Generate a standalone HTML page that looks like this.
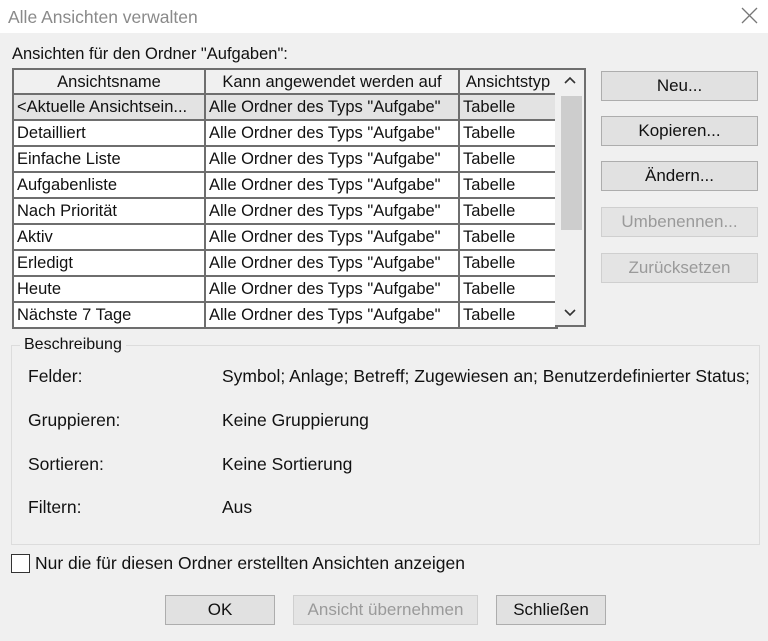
<!DOCTYPE html>
<html><head><meta charset="utf-8"><style>
*{margin:0;padding:0;box-sizing:border-box}
body{width:768px;height:641px;background:#f0f0f0;font-family:"Liberation Sans","DejaVu Sans",sans-serif;color:#111;position:relative;overflow:hidden;font-size:17px}
.abs{position:absolute;white-space:nowrap}
#title{left:0;top:0;width:768px;height:33px;background:#fff}
table{position:absolute;left:12px;top:68px;border-collapse:collapse;background:#fff;table-layout:fixed;width:544px}
td{border:2px solid #6e6e6e;height:26px;padding:0 3px;font-size:16.5px;white-space:nowrap;overflow:hidden;line-height:22px}
tr.h td{background:#f0f0f0;text-align:center;height:25px}
tr.sel td{background:#e3e3e3}
.btn{position:absolute;left:601px;width:157px;height:30px;border:1px solid #adadad;background:#e1e1e1;text-align:center;line-height:28px;font-size:17px}
.dis{color:#9a9a9a;background:#e4e4e4;border-color:#cfcfcf}
.d{font-size:17.5px}
</style></head><body>
<div id="title" class="abs"></div>
<div class="abs" style="left:8px;top:7px;color:#8a8a8a;font-size:17.5px">Alle Ansichten verwalten</div>
<svg class="abs" style="left:741px;top:7px" width="17" height="17"><path d="M1 1L16 16M16 1L1 16" stroke="#777" stroke-width="1.3"/></svg>
<div class="abs" style="left:12px;top:45px;font-size:16.5px">Ansichten für den Ordner "Aufgaben":</div>
<table>
<colgroup><col style="width:192px"><col style="width:254px"><col style="width:98px"></colgroup>
<tr class="h"><td>Ansichtsname</td><td>Kann angewendet werden auf</td><td>Ansichtstyp</td></tr>
<tr class="sel"><td>&lt;Aktuelle Ansichtsein...</td><td>Alle Ordner des Typs "Aufgabe"</td><td>Tabelle</td></tr>
<tr><td>Detailliert</td><td>Alle Ordner des Typs "Aufgabe"</td><td>Tabelle</td></tr>
<tr><td>Einfache Liste</td><td>Alle Ordner des Typs "Aufgabe"</td><td>Tabelle</td></tr>
<tr><td>Aufgabenliste</td><td>Alle Ordner des Typs "Aufgabe"</td><td>Tabelle</td></tr>
<tr><td>Nach Priorität</td><td>Alle Ordner des Typs "Aufgabe"</td><td>Tabelle</td></tr>
<tr><td>Aktiv</td><td>Alle Ordner des Typs "Aufgabe"</td><td>Tabelle</td></tr>
<tr><td>Erledigt</td><td>Alle Ordner des Typs "Aufgabe"</td><td>Tabelle</td></tr>
<tr><td>Heute</td><td>Alle Ordner des Typs "Aufgabe"</td><td>Tabelle</td></tr>
<tr><td>Nächste 7 Tage</td><td>Alle Ordner des Typs "Aufgabe"</td><td>Tabelle</td></tr>
</table>
<div class="abs" style="left:555px;top:68px;width:31px;height:259px;border:2px solid #6e6e6e;border-left:none;background:#f0f0f0"></div>
<div class="abs" style="left:561px;top:96px;width:21px;height:134px;background:#cdcdcd"></div>
<svg class="abs" style="left:564px;top:76px" width="12" height="10"><path d="M1 7L6 2L11 7" stroke="#333" stroke-width="1.6" fill="none"/></svg>
<svg class="abs" style="left:564px;top:308px" width="12" height="10"><path d="M1 2L6 7L11 2" stroke="#333" stroke-width="1.6" fill="none"/></svg>
<div class="btn" style="top:71px">Neu...</div>
<div class="btn" style="top:116px">Kopieren...</div>
<div class="btn" style="top:161px">Ändern...</div>
<div class="btn dis" style="top:207px">Umbenennen...</div>
<div class="btn dis" style="top:253px">Zurücksetzen</div>
<div class="abs" style="left:11px;top:345px;width:749px;height:200px;border:1px solid #dcdcdc"></div>
<div class="abs" style="left:20px;top:336px;background:#f0f0f0;padding:0 4px;font-size:16px">Beschreibung</div>
<div class="abs d" style="left:28px;top:366px">Felder:</div>
<div class="abs d" style="left:222px;top:366px">Symbol; Anlage; Betreff; Zugewiesen an; Benutzerdefinierter Status;</div>
<div class="abs d" style="left:28px;top:410px">Gruppieren:</div>
<div class="abs d" style="left:222px;top:410px">Keine Gruppierung</div>
<div class="abs d" style="left:28px;top:454px">Sortieren:</div>
<div class="abs d" style="left:222px;top:454px">Keine Sortierung</div>
<div class="abs d" style="left:28px;top:497px">Filtern:</div>
<div class="abs d" style="left:222px;top:497px">Aus</div>
<div class="abs" style="left:11px;top:554px;width:19px;height:19px;border:1px solid #333;background:#fff"></div>
<div class="abs d" style="left:35px;top:553px">Nur die für diesen Ordner erstellten Ansichten anzeigen</div>
<div class="btn" style="left:165px;top:595px;width:110px">OK</div>
<div class="btn dis" style="left:293px;top:595px;width:185px">Ansicht übernehmen</div>
<div class="btn" style="left:496px;top:595px;width:110px">Schließen</div>
</body></html>
